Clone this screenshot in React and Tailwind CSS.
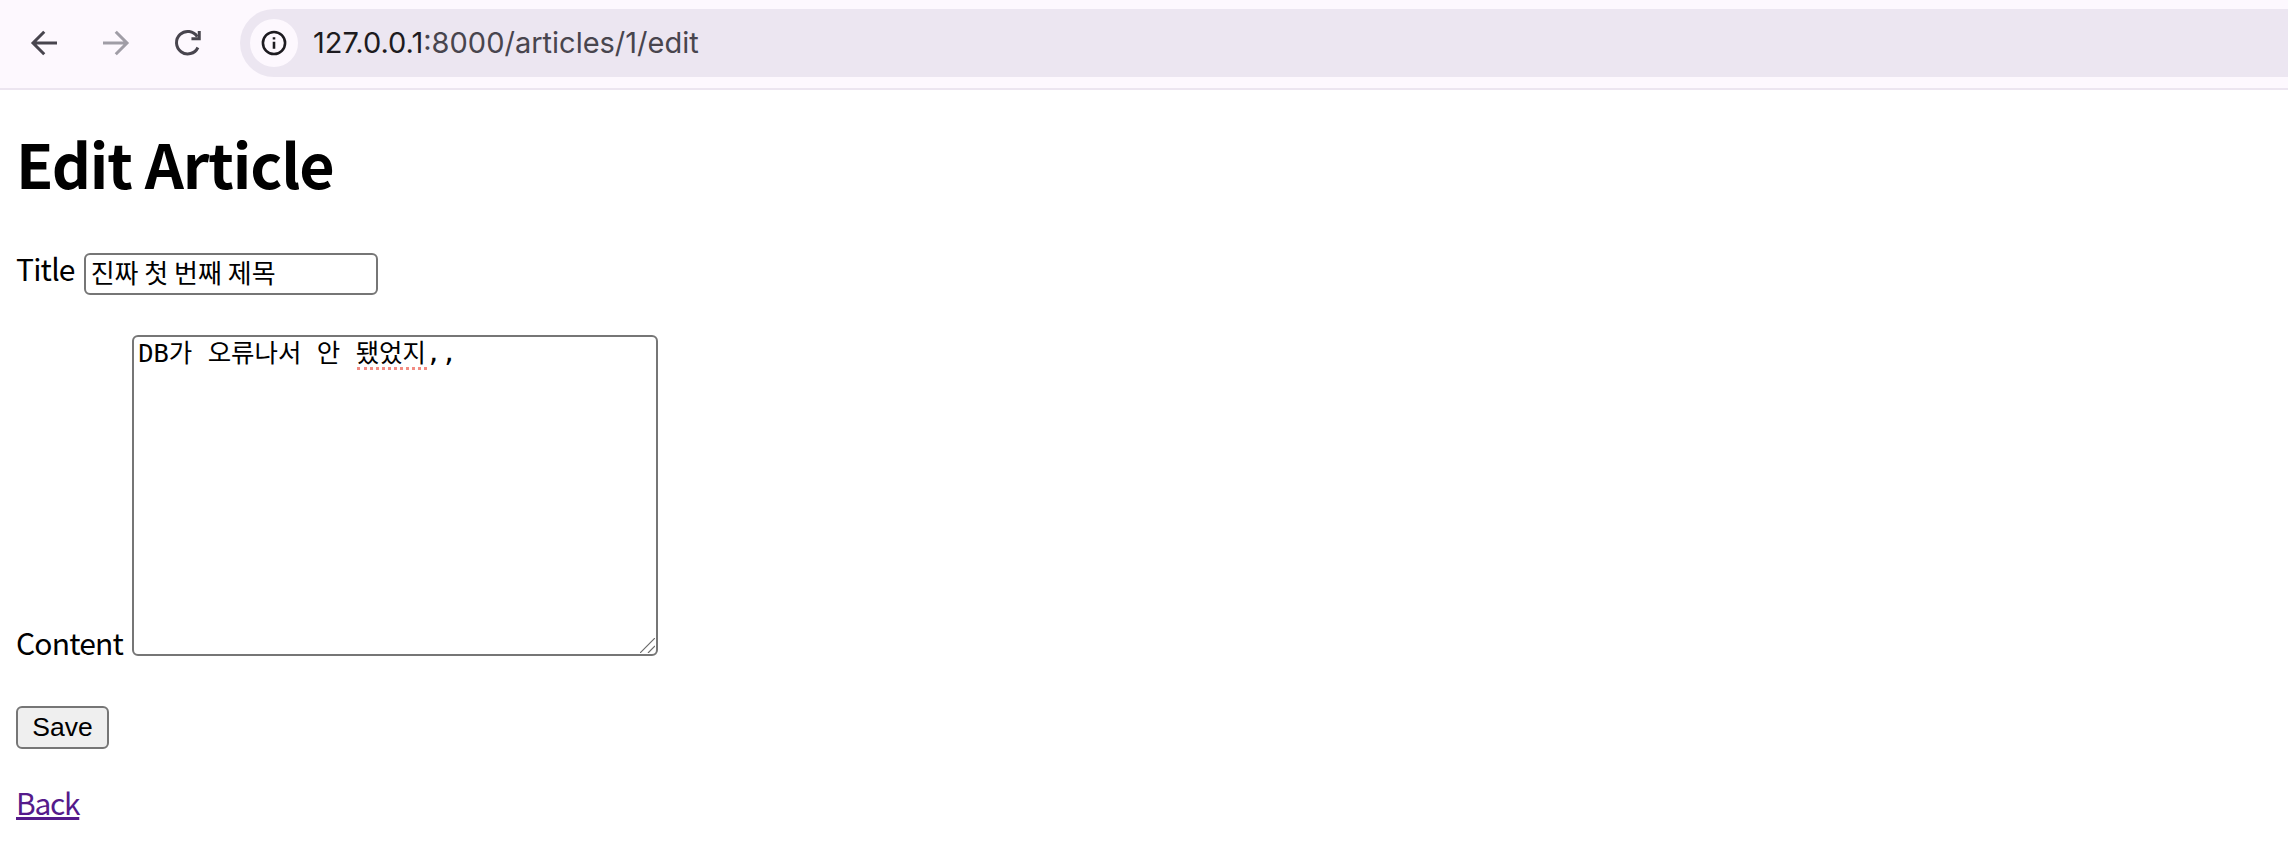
const FONT = 'font-["Noto_Sans_CJK_KR","Noto_Sans",sans-serif]';

function Toolbar() {
  return (
    <div className="h-[90px] bg-[#fdf8fe] border-b-2 border-[#ece5f0] flex items-center pl-[27px] pb-[3px]">
      <div className="flex items-center text-[#48454e]">
        <svg width="36" height="36" viewBox="0 0 24 24" fill="none" stroke="currentColor" strokeWidth="2">
          <path d="M20 12H4.5M11.5 4.5 4 12l7.5 7.5" />
        </svg>
        <svg className="ml-[34px]" width="36" height="36" viewBox="0 0 24 24" fill="none" stroke="#a09da6" strokeWidth="2">
          <path d="M4 12h15.5M12.5 4.5 20 12l-7.5 7.5" />
        </svg>
        <svg className="ml-[37px]" width="36" height="36" viewBox="0 0 24 24" fill="none" stroke="currentColor" strokeWidth="2">
          <path d="M18.6 15a7.5 7.5 0 1 1-.4-7.2" />
          <path d="M19.5 4v5.2h-5.2" />
        </svg>
      </div>
      <div className="ml-[34px] flex-1 h-[68px] rounded-l-[34px] bg-[#ece6f1] flex items-center pl-[10px]">
        <div className="w-[48px] h-[48px] rounded-full bg-[#fdf8fe] flex items-center justify-center">
          <svg width="28" height="28" viewBox="0 0 24 24" fill="none" stroke="#1d1b20" strokeWidth="2.2">
            <circle cx="12" cy="12" r="9.5" />
            <path d="M12 11v6M12 7v2" />
          </svg>
        </div>
        <span className='ml-[15px] text-[29px] font-["Inter",sans-serif] text-[#1d1b20]'>
          127.0.0.1<span className="text-[#48454e]">:8000/articles/1/edit</span>
        </span>
      </div>
    </div>
  );
}

export default function App() {
  return (
    <div className={`min-h-screen bg-white text-black ${FONT}`}>
      <Toolbar />
      <div className="px-[16px]">
        <h1 className="text-[61px] font-bold tracking-[-1.1px] leading-[72px] mt-[37px]">Edit Article</h1>

        <div className="mt-[54px] flex items-center gap-[9px] text-[30px] tracking-[-0.8px] leading-[46px]">
          <label className="-mt-[12px]">Title</label>
          <input
            defaultValue="진짜 첫 번째 제목"
            className="w-[294px] h-[42px] px-[5px] pb-[5px] border-2 border-[#767676] rounded-[6px] text-[26px] tracking-normal leading-none outline-none"
          />
        </div>

        <div className="mt-[40px] flex items-end gap-[9px] text-[30px] tracking-[-0.8px] leading-[46px]">
          <label className="-mb-[9px]">Content</label>
          <div className="relative flex">
            <textarea
              defaultValue="DB가 오류나서 안 됐었지,,"
              spellCheck="false"
              className='w-[526px] h-[321px] px-[4px] pt-[1px] pb-[3px] border-2 border-[#767676] rounded-[6px] text-[25.5px] tracking-normal leading-[31px] outline-none resize-none font-["DejaVu_Sans_Mono","Noto_Sans_CJK_KR",monospace]'
            />
            {/* spellcheck squiggle */}
            <div className="absolute left-[225px] top-[32px] w-[70px] border-b-[3px] border-dotted border-[#f28b82]" />
            {/* resize grip */}
            <svg className="absolute right-[3px] bottom-[3px]" width="15" height="15" viewBox="0 0 15 15" fill="none" stroke="#6b6b6b" strokeWidth="1.2">
              <path d="M0 15 15 0M8 15l7-7" />
            </svg>
          </div>
        </div>

        <button className='mt-[50px] block w-[93px] h-[43px] bg-[#efefef] border-2 border-[#767676] rounded-[6px] text-[26.5px] font-["Liberation_Sans",sans-serif]'>
          Save
        </button>

        <a href="#" className="mt-[30px] inline-block text-[30px] tracking-[-1.3px] leading-[46px] text-[#551a8b] underline decoration-[3px]">
          Back
        </a>
      </div>
    </div>
  );
}
